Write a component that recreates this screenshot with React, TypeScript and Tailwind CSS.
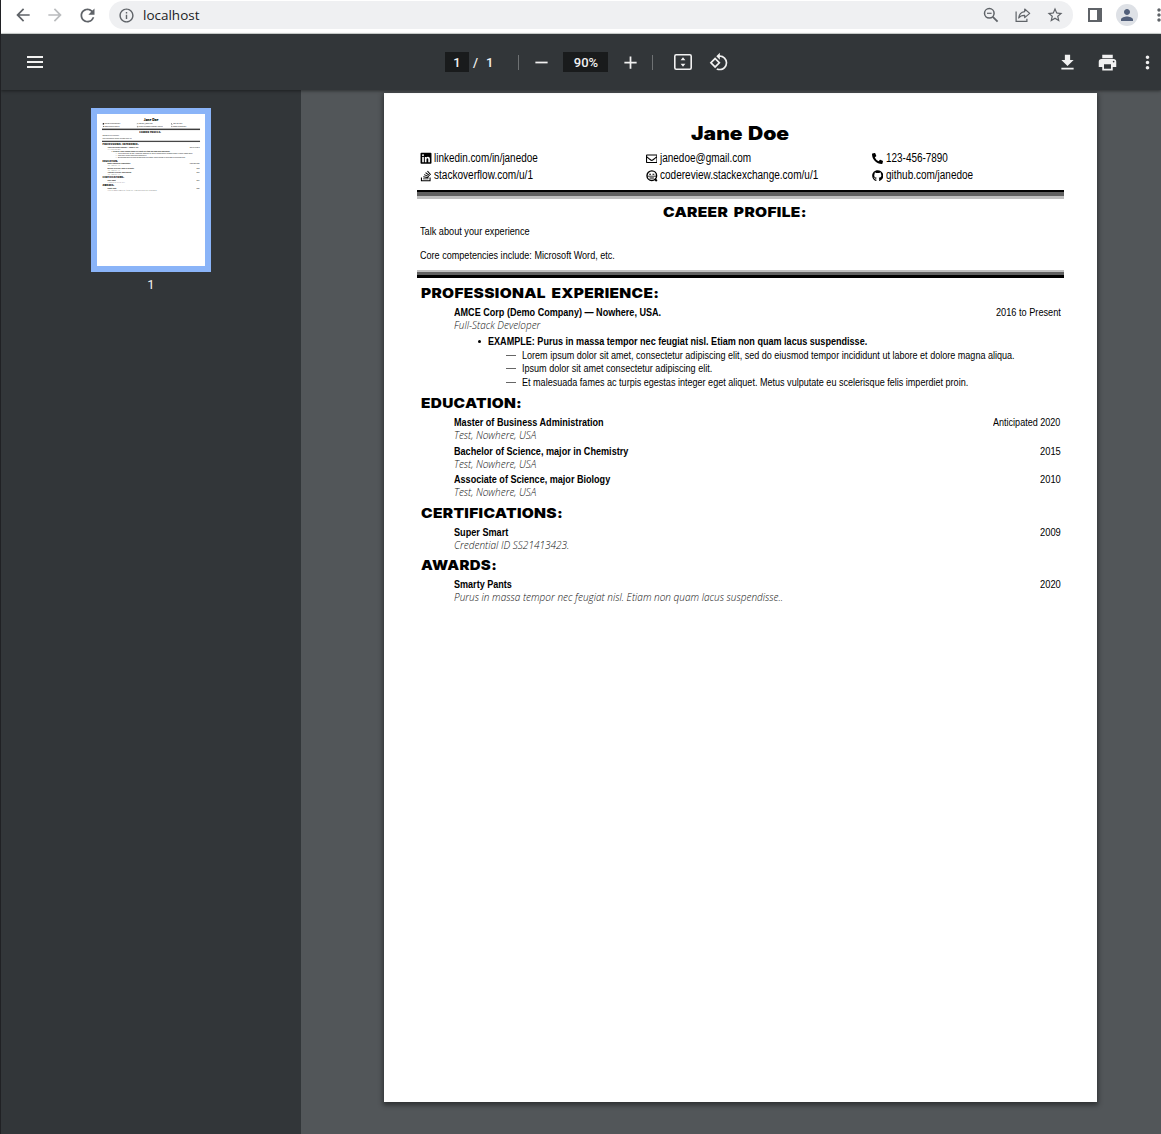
import { useLayoutEffect, useRef, useState, type ReactNode } from "react";
import { FaGithub, FaLinkedin, FaPhoneAlt, FaRegEnvelope, FaStackOverflow } from "react-icons/fa";
import {
  MdAdd,
  MdArrowBack,
  MdArrowForward,
  MdMoreVert,
  MdOutlineInfo,
  MdPerson,
  MdPrint,
  MdRefresh,
  MdRemove,
  MdRotate90DegreesCcw,
  MdStarBorder,
} from "react-icons/md";

/* A single line of type condensed or expanded to a fixed measure. */
function Fit({ w, className = "", children }: { w: number; className?: string; children: ReactNode }) {
  const ref = useRef<HTMLSpanElement>(null);
  const [scale, setScale] = useState(1);
  useLayoutEffect(() => {
    const el = ref.current;
    if (el && el.offsetWidth) setScale(w / el.offsetWidth);
  }, [w]);
  return (
    <span className={`flex shrink-0 items-center ${className}`} style={{ width: w }}>
      <span ref={ref} className="inline-block origin-left whitespace-nowrap" style={{ transform: `scaleX(${scale})` }}>
        {children}
      </span>
    </span>
  );
}

const NARROW = "font-['Liberation_Sans_Narrow','Liberation_Sans',sans-serif]";

function CodeReviewIcon() {
  return (
    <svg viewBox="0 0 12 12" className="size-3" fill="none" stroke="currentColor">
      <circle cx="5.8" cy="5.7" r="4.8" strokeWidth="1.4" />
      <path d="M8.600 8.800L10.800 11" strokeWidth="2" />
      <path d="M1.500 6.200h8.600" strokeWidth="0.8" />
      <path d="M3.200 4.200h1.800M6.500 4.200h1.800M3.500 8h4.400" strokeWidth="1.100" />
    </svg>
  );
}

const contacts = [
  { icon: <FaLinkedin size={12.5} />, text: "linkedin.com/in/janedoe", w: 104 },
  { icon: <FaRegEnvelope size={11.5} />, text: "janedoe@gmail.com", w: 91 },
  { icon: <FaPhoneAlt size={11} />, text: "123-456-7890", w: 62 },
  { icon: <FaStackOverflow size={12} className="scale-x-115" />, text: "stackoverflow.com/u/1", w: 99 },
  { icon: <CodeReviewIcon />, text: "codereview.stackexchange.com/u/1", w: 158 },
  { icon: <FaGithub size={11.5} />, text: "github.com/janedoe", w: 87 },
];

function Heading({ w, className = "", children }: { w: number; className?: string; children: ReactNode }) {
  return (
    <h2 className={`flex h-5 px-[3.5px] font-['Inter',sans-serif] text-[13.5px] leading-[21px] font-black tracking-[0.02em] [word-spacing:2px] ${className}`}>
      <Fit w={w}>{children}</Fit>
    </h2>
  );
}

type EntryProps = { title: string; w: number; date: string; dateW: number; sub: string; subW: number; className?: string };

function Entry({ title, w, date, dateW, sub, subW, className = "" }: EntryProps) {
  return (
    <div className={`pr-[3.5px] pl-[37px] ${className}`}>
      <div className="flex h-3.5 justify-between text-[11.4px] leading-[14px]">
        <Fit w={w} className="font-bold">{title}</Fit>
        <Fit w={dateW}>{date}</Fit>
      </div>
      <div className="flex h-3 font-['Open_Sans',sans-serif] text-[10.7px] leading-3 font-light text-[#111] italic">
        <Fit w={subW}>{sub}</Fit>
      </div>
    </div>
  );
}

function DashItem({ w, className, children }: { w: number; className: string; children: ReactNode }) {
  return (
    <li className={`flex items-center pl-[89px] ${className}`}>
      <span className="mt-px mr-1.5 h-px w-2.5 bg-[#666]" />
      <Fit w={w}>{children}</Fit>
    </li>
  );
}

/* `compact` draws the rules in solid black so they hold up at thumbnail size. */
function Resume({ compact = false }: { compact?: boolean }) {
  return (
    <article className={`h-[1009px] w-[713px] bg-white px-[33px] pt-[26px] text-black ${NARROW}`}>
      <h1 className="flex h-7 justify-center pr-px font-['Inter',sans-serif] text-[18.5px] leading-[30px] font-black [word-spacing:1px]">
        <Fit w={98}>Jane Doe</Fit>
      </h1>
      <div className="mt-[3px] grid grid-cols-[226px_226px_auto] pl-[2.500px] text-[12.5px] leading-[17px]">
        {contacts.map((c) => (
          <div key={c.text} className="flex h-[17px] items-center gap-0.5">
            <span className="flex w-3 shrink-0 justify-center">{c.icon}</span>
            <Fit w={c.w}>{c.text}</Fit>
          </div>
        ))}
      </div>
      <div className="mt-1.5">
        <div className="h-0.5 bg-black" />
        <div className={compact ? "h-1 bg-black" : "h-1 bg-[#606060]"} />
        <div className={compact ? "h-[3px] bg-black" : "h-[3px] bg-[#bfbfbf]"} />
      </div>
      <Heading w={144} className="mt-[3px] justify-center pr-[14px]">CAREER PROFILE:</Heading>
      <div className="mt-0.5 flex flex-col gap-2.5 pl-[3px] text-[11.4px] leading-[14px]">
        <Fit w={109.5}>Talk about your experience</Fit>
        <Fit w={195}>Core competencies include: Microsoft Word, etc.</Fit>
      </div>
      <div className="mt-2">
        <div className={compact ? "h-0.5 bg-black" : "h-0.5 bg-[#bfbfbf]"} />
        <div className={compact ? "h-[3px] bg-black" : "h-[3px] bg-[#606060]"} />
        <div className="h-[3px] bg-black" />
      </div>
      <Heading w={238.5} className="mt-[5px]">PROFESSIONAL EXPERIENCE:</Heading>
      <Entry className="mt-0.5" title="AMCE Corp (Demo Company) — Nowhere, USA." w={207} date="2016 to Present" dateW={64.5} sub="Full-Stack Developer" subW={86.5} />
      <ul className="mt-[3px] text-[11.4px] leading-[14px]">
        <li className="flex h-3.5 items-center pl-[61px] font-bold">
          <span className="mr-[7px] size-[3px] rounded-full bg-black" />
          <Fit w={379.5}>EXAMPLE: Purus in massa tempor nec feugiat nisl. Etiam non quam lacus suspendisse.</Fit>
        </li>
        <DashItem className="h-3.5" w={493}>
          Lorem ipsum dolor sit amet, consectetur adipiscing elit, sed do eiusmod tempor incididunt ut labore et dolore magna aliqua.
        </DashItem>
        <DashItem className="mb-px h-3" w={190}>Ipsum dolor sit amet consectetur adipiscing elit.</DashItem>
        <DashItem className="h-3.5" w={446.5}>
          Et malesuada fames ac turpis egestas integer eget aliquet. Metus vulputate eu scelerisque felis imperdiet proin.
        </DashItem>
      </ul>
      <Heading w={101.5} className="mt-1">EDUCATION:</Heading>
      <Entry className="mt-0.5" title="Master of Business Administration" w={150} date="Anticipated 2020" dateW={67.5} sub="Test, Nowhere, USA" subW={82} />
      <Entry className="mt-[3px]" title="Bachelor of Science, major in Chemistry" w={174} date="2015" dateW={20.5} sub="Test, Nowhere, USA" subW={82} />
      <Entry className="mt-0.5" title="Associate of Science, major Biology" w={156} date="2010" dateW={20.5} sub="Test, Nowhere, USA" subW={82} />
      <Heading w={142.5} className="mt-[5px]">CERTIFICATIONS:</Heading>
      <Entry className="mt-0.5" title="Super Smart" w={54.5} date="2009" dateW={20.5} sub="Credential ID SS21413423." subW={115.5} />
      <Heading w={75.5} className="mt-1">AWARDS:</Heading>
      <Entry className="mt-0.5" title="Smarty Pants" w={58} date="2020" dateW={20.5} sub="Purus in massa tempor nec feugiat nisl. Etiam non quam lacus suspendisse.." subW={329} />
    </article>
  );
}

function BrowserBar() {
  return (
    <header className="flex h-[34px] shrink-0 items-start border-b border-[#d5dad8] bg-white pt-px text-[#5f6368]">
      <div className="flex h-7 w-[108px] shrink-0 items-center pl-3">
        <MdArrowBack size={20} />
        <MdArrowForward size={20} className="ml-3 text-[#babcbe]" />
        <MdRefresh size={21} className="ml-3" />
      </div>
      <div className="flex h-7 w-[964px] shrink-0 items-center rounded-full bg-[#eff0f2] pl-[9px]">
        <MdOutlineInfo size={17} />
        <Fit w={56} className="mt-0.5 ml-2 font-['Open_Sans',sans-serif] text-[13px] text-[#202124]">localhost</Fit>
        <div className="ml-auto flex items-center pr-[9px]">
          <svg viewBox="0 0 16 16" className="size-4" fill="none" stroke="currentColor" strokeWidth="1.5">
            <circle cx="6.3" cy="6.3" r="4.8" />
            <path d="M9.8 9.8L14.6 14.6" strokeWidth="1.8" />
            <path d="M4 6.3h4.6" strokeWidth="1.2" />
          </svg>
          <svg viewBox="0 0 16 16" className="ml-4 size-4" fill="none" stroke="currentColor" strokeWidth="1.2">
            <path d="M1.1 4.5v9.9h10.8v-2.6" />
            <path d="M9.7 2l5 4.4-5 4.2V8.3C6.800 8.200 5 9 3.700 11c.3-3.400 2.300-5.900 6-6.400z" strokeLinejoin="round" />
          </svg>
          <MdStarBorder size={18} className="ml-[15px]" />
        </div>
      </div>
      <div className="ml-[15px] flex h-7 shrink-0 items-center">
        <span className="h-3.5 w-3.5 border-2 border-r-[5px] border-[#5f6368]" />
        <span className="ml-3.5 flex size-[22px] items-center justify-center rounded-full bg-[#dee1e6] text-[#515f7a]">
          <MdPerson size={18} />
        </span>
        <MdMoreVert size={20} className="ml-[11px] shrink-0" />
      </div>
    </header>
  );
}

function ViewerToolbar() {
  return (
    <div className="relative z-10 flex h-14 shrink-0 items-center bg-[#323639] font-['Roboto',sans-serif] text-[13px] leading-[21px] font-medium text-[#f1f1f1] shadow-[0_1px_3px_rgba(0,0,0,0.45)]">
      <div className="ml-[26px] flex w-4 flex-col gap-[3px]">
        <span className="h-0.5 bg-current" />
        <span className="h-0.5 bg-current" />
        <span className="h-0.5 bg-current" />
      </div>
      <span className="ml-[402px] h-5 w-6 bg-[#191b1c] text-center">1</span>
      <span className="ml-1">/</span>
      <span className="ml-2">1</span>
      <span className="ml-[25px] h-[15px] w-px bg-[#6e7173]" />
      <MdRemove size={21} className="ml-3" />
      <span className="ml-[11px] h-5 w-[45px] bg-[#191b1c] text-center">90%</span>
      <MdAdd size={21} className="ml-3" />
      <span className="ml-[11px] h-[15px] w-px bg-[#6e7173]" />
      <svg viewBox="0 0 18 16" className="ml-[21px] h-4 w-[18px]" fill="none">
        <rect x="0.8" y="0.8" width="16.4" height="14.4" rx="1.4" stroke="currentColor" strokeWidth="1.6" />
        <path d="M9 3.200L11.400 6.200H6.600zM9 12.800L6.600 9.800h4.800z" fill="currentColor" />
      </svg>
      <MdRotate90DegreesCcw size={20} className="ml-[17px]" />
      <div className="ml-auto flex items-center pr-[3px]">
        <svg viewBox="0 0 24 24" className="size-[21px]" fill="currentColor">
          <path d="M19 9h-4V3H9v6H5l7 7 7-7zM5 18v2h14v-2H5z" />
        </svg>
        <MdPrint size={21} className="ml-[19px]" />
        <MdMoreVert size={21} className="ml-[19px]" />
      </div>
    </div>
  );
}

export default function App() {
  return (
    <div className="flex h-[1134px] w-[1161px] flex-col overflow-hidden border-l border-[#202124] bg-[#525659]">
      <BrowserBar />
      <ViewerToolbar />
      <div className="flex min-h-0 flex-1">
        <aside className="flex w-[300px] shrink-0 flex-col items-center bg-[#323639] pt-[18px]">
          <div className="h-[164px] w-[120px] overflow-hidden border-[6px] border-[#8ab4f8] bg-white" aria-hidden="true">
            <div className="h-[1009px] w-[713px] origin-top-left scale-[0.1515]">
              <Resume compact />
            </div>
          </div>
          <span className="mt-[3px] font-['Roboto',sans-serif] text-[13px] leading-5 text-[#f1f1f1]">1</span>
        </aside>
        <main className="flex-1 pt-[3px] pl-[83px]">
          <div className="w-[713px] shadow-[0_2px_5px_1px_rgba(0,0,0,0.45)]">
            <Resume />
          </div>
        </main>
      </div>
    </div>
  );
}
